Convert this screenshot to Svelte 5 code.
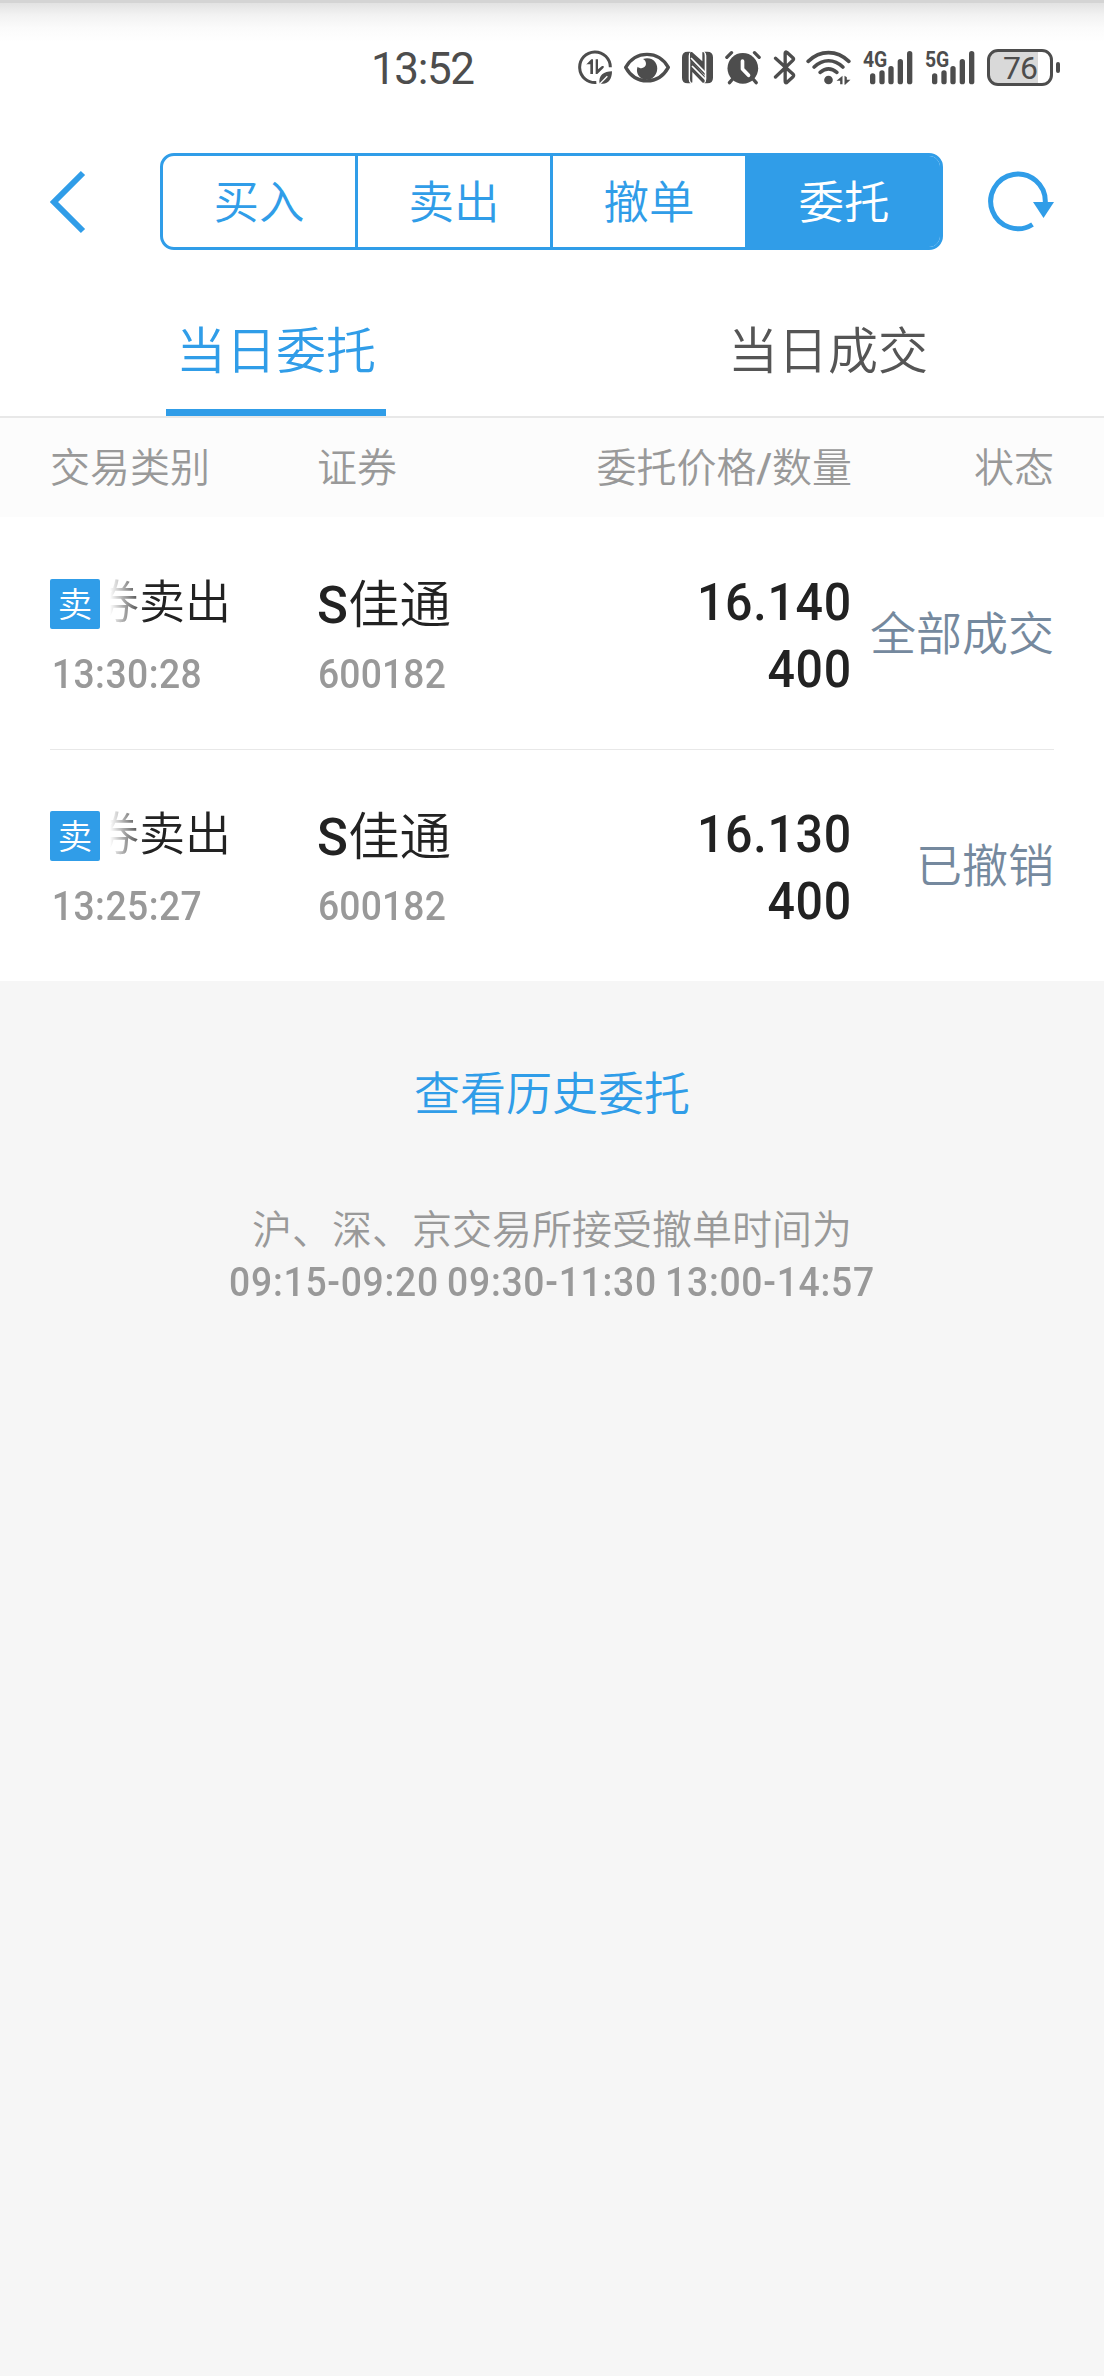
<script>
  // Order list of the trading screen: today's entrusts and the cancel hints.
  const actions = ["买入", "卖出", "撤单", "委托"];
  const tabs = ["当日委托", "当日成交"];

  let action = $state("委托");
  let tab = $state("当日委托");

  const orders = [
    { time: "13:30:28", mark: "S", name: "佳通", code: "600182", price: "16.140", qty: "400", status: "全部成交" },
    { time: "13:25:27", mark: "S", name: "佳通", code: "600182", price: "16.130", qty: "400", status: "已撤销" },
  ];

  const networks = ["4G", "5G"];
  const bars = [
    { x: 29, y: 78 },
    { x: 57, y: 69 },
    { x: 84, y: 56 },
    { x: 112, y: 35 },
    { x: 140, y: 11 },
  ];
</script>

<div class="screen">
  <div class="statusbar">
    <div class="clock">13:52</div>
    <div class="sys">
      <svg class="saver" viewBox="54 48 102 120" width="34" height="40">
        <path d="M109 157.500A46 46 0 1 1 151 112" fill="none" stroke="currentColor" stroke-width="9" />
        <path d="M78 104L94 88H99V132H91V103H78ZM107 88H114V118L126 108H131V113L112 132H107Z" fill="currentColor" />
        <path d="M119 162C114 136 132 124 156 124C156 148 144 164 124 161Z" fill="currentColor" />
        <path d="M117 164L142 139" stroke="#fff" stroke-width="4" />
      </svg>
      <svg class="eye" viewBox="192 48 138 120" width="46" height="40">
        <path d="M197 112C227 60 295 60 325 112C295 166 227 166 197 112Z" fill="none" stroke="currentColor" stroke-width="10" stroke-linejoin="round" />
        <path d="M249 87C278 78 296 101 291 123C285 146 266 154 249 147C231 139 228 121 233 110C241 118 257 115 258 102C258 94 254 90 249 87Z" fill="currentColor" />
      </svg>
      <svg class="nfc" viewBox="366 48 93 120" width="31" height="40">
        <path d="M383 65H392Q386 68 386 78V148Q386 157 392 160H383Q366 160 366 143V82Q366 65 383 65Z" fill="currentColor" />
        <path d="M442 160H433Q439 157 439 147V77Q439 68 433 65H442Q459 65 459 82V143Q459 160 442 160Z" fill="currentColor" />
        <path d="M390 69Q390 65 396 66L427 94V68Q427 65 431 67Q434 70 434 77V136L390 90Z" fill="currentColor" />
        <path d="M391 88L434 138V154Q434 160 428 158L397 126V156Q397 160 393 157Q390 154 390 147Z" fill="currentColor" />
        <path d="M393 84L436 128M396 108L436 148" stroke="#fff" stroke-width="5" />
      </svg>
      <svg class="alarm" viewBox="496 48 107 120" width="36" height="40">
        <circle cx="549" cy="115" r="46" fill="currentColor" />
        <path d="M501 82L515 68M584 68L598 82M521 144L509 158M577 144L589 158" stroke="currentColor" stroke-width="10" stroke-linecap="round" />
        <path d="M548 93V117L566 136" fill="none" stroke="#fff" stroke-width="11" stroke-linecap="round" stroke-linejoin="round" />
      </svg>
      <svg class="bt" viewBox="638 48 68 120" width="23" height="40">
        <path d="M645 85L698 133Q701 137 697 141L678 158Q674 159 674 153V70Q674 64 679 67L697 83Q701 87 697 91L645 141" fill="none" stroke="currentColor" stroke-width="10" stroke-linecap="round" stroke-linejoin="round" />
      </svg>
      <svg class="wifi" viewBox="20 48 134 120" width="45" height="40">
        <path d="M26 94C62 59 112 59 148 94M44 111C70 86 104 86 130 111M62 127C78 114 96 114 112 127" fill="none" stroke="currentColor" stroke-width="11" stroke-linecap="round" />
        <circle cx="87" cy="150" r="13" fill="currentColor" />
        <path d="M111 152L129 137V163H122V152ZM135 137L142 142V149H153L137 164H135Z" fill="currentColor" />
      </svg>
      {#each networks as net}
        <svg class="signal" viewBox="0 -4 150 120" width="50" height="40">
          <text class="net" x="0" y="58" textLength="73" lengthAdjust="spacingAndGlyphs">{net}</text>
          {#each bars as bar}
            <path d="M{bar.x} {bar.y + 8}V103" stroke="currentColor" stroke-width="16" stroke-linecap="round" />
          {/each}
        </svg>
      {/each}
      <div class="battery"><span class="level">76</span></div>
    </div>
  </div>

  <div class="nav">
    <svg class="back" width="36" height="64" viewBox="0 0 36 64" fill="none" stroke="currentColor" stroke-width="6">
      <path d="M33 3L4 32L33 61" />
    </svg>
    <div class="segments">
      {#each actions as item}
        <button class="segment" class:active={action === item} onclick={() => (action = item)}>{item}</button>
      {/each}
    </div>
    <svg class="refresh" width="66" height="62" viewBox="0 0 66 62">
      <path d="M44.500 53.500A27.300 27.300 0 1 1 57.300 31" fill="none" stroke="currentColor" stroke-width="5" />
      <path d="M45 31H66L55.500 47Z" fill="currentColor" />
    </svg>
  </div>

  <div class="tabs">
    {#each tabs as item}
      <button class="tab" class:active={tab === item} onclick={() => (tab = item)}><span>{item}</span></button>
    {/each}
  </div>

  <div class="grid head">
    <div>交易类别</div>
    <div>证券</div>
    <div class="right">委托价格<span class="slash">/</span>数量</div>
    <div class="right">状态</div>
  </div>

  <div class="orders">
    {#each orders as order}
      <div class="grid order">
        <div>
          <div class="kind">
            <span class="badge">卖</span>
            <span class="marquee">券卖出</span>
          </div>
          <div class="sub time">{order.time}</div>
        </div>
        <div>
          <div class="name"><span class="mark">{order.mark}</span>{order.name}</div>
          <div class="sub code">{order.code}</div>
        </div>
        <div class="right nums">
          <div>{order.price}</div>
          <div>{order.qty}</div>
        </div>
        <div class="right status">{order.status}</div>
      </div>
    {/each}
  </div>

  <div class="foot">
    <div class="history">查看历史委托</div>
    <div class="tip">沪、深、京交易所接受撤单时间为</div>
    <div class="hours">09:15-09:20 09:30-11:30 13:00-14:57</div>
  </div>
</div>

<style>
  :global(body) { background: #f6f6f6; }
  .screen {
    --blue: #309de8;
    --gray: #999;
    min-height: 2376px;
    font-family: "Noto Sans CJK SC", sans-serif;
    font-weight: 350;
    color: #222;
    background: #f6f6f6;
  }
  button { font: inherit; color: inherit; background: none; border: 0; padding: 0; }
  svg { display: block; flex: none; }

  .statusbar {
    display: flex;
    box-sizing: border-box;
    height: 130px;
    padding: 46px 44px 0 371px;
    justify-content: space-between;
    color: #4d4d4d;
    background: linear-gradient(#d4d4d4 3px, #e2e2e2 3px, #f2f2f2 15px, #fbfbfb 28px, #fff 42px);
  }
  .clock { font: 400 44px/46px Roboto, sans-serif; letter-spacing: -1.4px; }
  .sys { display: flex; height: 40px; }
  .saver { margin-right: 12px; }
  .eye { margin-right: 12px; }
  .nfc { margin-right: 12px; }
  .alarm { margin-right: 12px; }
  .bt { margin-right: 10px; }
  .wifi { margin-right: 12px; }
  .signal { margin-right: 12px; }
  .net { font: 700 64px Roboto, sans-serif; fill: currentColor; }
  .battery {
    position: relative;
    box-sizing: border-box;
    width: 66px;
    height: 37px;
    margin: 3px 7px 0 0;
    border: 3px solid #4d4d4d;
    border-radius: 11px;
    background: linear-gradient(90deg, #d9d9d9 48px, #fff 48px);
  }
  .battery::after {
    content: "";
    position: absolute;
    right: -10px;
    top: 10px;
    width: 4px;
    height: 11px;
    border-radius: 2px;
    background: #4d4d4d;
  }
  .level { display: block; text-align: center; font: 400 32px/32px Roboto, sans-serif; letter-spacing: -1px; }

  .nav {
    display: flex;
    box-sizing: border-box;
    height: 160px;
    padding: 23px 50px 0;
    background: #fff;
    color: var(--blue);
  }
  .back { margin: 17px 74px 0 0; }
  .segments {
    display: flex;
    box-sizing: border-box;
    width: 783px;
    height: 97px;
    border: 3px solid var(--blue);
    border-radius: 14px;
    overflow: hidden;
  }
  .segment { flex: 1; font-size: 45.500px; line-height: 86px; padding-bottom: 5px; }
  .segment + .segment { border-left: 3px solid var(--blue); }
  .segment.active { background: var(--blue); color: #fff; }
  .refresh { margin: 18px 0 0 45px; }

  .tabs {
    display: flex;
    height: 126px;
    border-bottom: 2px solid #e8e8e8;
    background: #fff;
    color: #555;
  }
  .tab { flex: 1; display: flex; justify-content: center; font-size: 50px; }
  .tab span { box-sizing: border-box; width: 220px; height: 126px; line-height: 115px; }
  .tab.active { color: var(--blue); }
  .tab.active span { border-bottom: 7px solid var(--blue); }

  .grid {
    display: grid;
    grid-template-columns: 267px 270px 265px 202px;
    margin: 0 50px;
  }
  .right { text-align: right; }
  .head {
    height: 99px;
    margin: 0;
    padding: 0 50px;
    line-height: 94px;
    font-size: 40px;
    color: var(--gray);
    background: #fcfcfc;
  }
  .slash { font-family: Roboto, sans-serif; font-weight: 500; }

  .orders { background: #fff; }
  .order { box-sizing: border-box; height: 232px; padding-top: 62px; }
  .order + .order { border-top: 1px solid #e8e8e8; padding-top: 61px; }
  .kind { display: flex; height: 50px; }
  .badge {
    width: 50px;
    height: 50px;
    margin-right: 10px;
    border-radius: 2px;
    background: var(--blue);
    color: #fff;
    font-size: 34.500px;
    line-height: 47px;
    text-align: center;
  }
  .marquee {
    display: flex;
    justify-content: flex-end;
    width: 121px;
    height: 50px;
    overflow: hidden;
    white-space: nowrap;
    font-size: 46px;
    line-height: 38px;
    -webkit-mask-image: linear-gradient(90deg, transparent, #000 36px);
    mask-image: linear-gradient(90deg, transparent, #000 36px);
  }

  /* figures are set slightly narrow */
  .sub, .nums, .hours { font-family: Roboto, sans-serif; font-weight: 500; }
  .sub {
    margin-top: 20px;
    font-size: 40.500px;
    line-height: 51px;
    color: var(--gray);
    transform: scaleX(0.92);
    transform-origin: left;
  }
  .time { letter-spacing: 0.500px; padding-left: 2px; }
  .code { letter-spacing: 0.200px; padding-left: 1px; }
  .name { height: 50px; font-size: 51.500px; line-height: 44px; white-space: nowrap; }
  .mark { font-family: Roboto, sans-serif; font-weight: 500; font-size: 51px; }
  .nums {
    margin: -10px 0 0;
    font-size: 52.500px;
    line-height: 67px;
    letter-spacing: 0.800px;
    transform: scaleX(0.92);
    transform-origin: right;
  }
  .status { font-size: 46px; line-height: 102px; color: #75899e; white-space: nowrap; }

  .foot { padding-top: 76px; text-align: center; }
  .history { font-size: 46px; line-height: 66px; color: var(--blue); }
  .tip { margin-top: 77px; font-size: 40px; line-height: 54px; color: var(--gray); }
  .hours {
    font-size: 40.500px;
    line-height: 57px;
    letter-spacing: 0.800px;
    word-spacing: -2px;
    white-space: nowrap;
    color: var(--gray);
    transform: scaleX(0.92);
  }
</style>
